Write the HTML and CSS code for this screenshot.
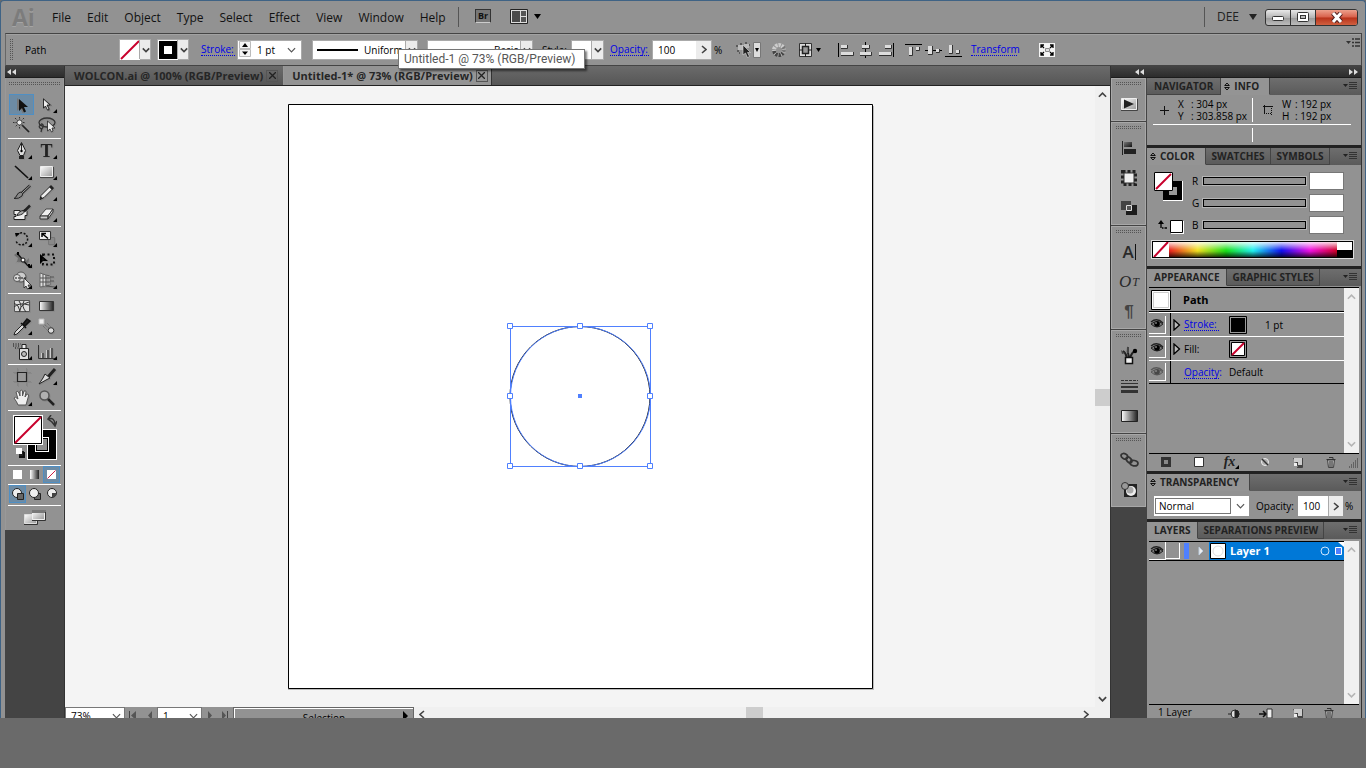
FILE: index.html
```html
<!DOCTYPE html>
<html lang="en">
<head>
<meta charset="utf-8">
<title>Untitled-1 @ 73% (RGB/Preview)</title>
<link rel="stylesheet" href="styles.css">
</head>
<body>
<svg class="defs" aria-hidden="true">
  <defs>
    <linearGradient id="light" x1="0" y1="0" x2="1" y2="1"><stop offset="0" stop-color="#fff"/><stop offset="1" stop-color="#999"/></linearGradient>
    <linearGradient id="dark" x1="0" y1="0" x2="1" y2="1"><stop offset="0" stop-color="#777"/><stop offset="1" stop-color="#111"/></linearGradient>
    <linearGradient id="ramp" x1="0" y1="0" x2="1" y2="0"><stop offset="0" stop-color="#fff"/><stop offset="1" stop-color="#222"/></linearGradient>
    <symbol id="chev" viewBox="0 0 10 6"><path d="M1 1l4 4 4-4" fill="none" stroke="#444" stroke-width="2"/></symbol>
    <symbol id="thin" viewBox="0 0 10 6"><path d="M1 1l4 4 4-4" fill="none" stroke="#555" stroke-width="1.300"/></symbol>
    <symbol id="none" viewBox="0 0 20 20"><path d="M0 0h20v20H0z" fill="#fff"/><path d="M1 19L19 1" stroke="#c8002c" stroke-width="2"/></symbol>
    <symbol id="flyout" viewBox="0 0 14 8"><path d="M0 2h5L2.500 5z" fill="#222"/><path d="M6 .5h8M6 2.500h8M6 4.500h8M6 6.500h8" stroke="#333"/></symbol>
    <symbol id="eye" viewBox="0 0 14 12"><path d="M1 4Q7-1 13 5" fill="none" stroke="#222" stroke-width="1.300"/><path d="M1 6Q7 1 13 6Q7 12 1 6z" fill="#777" stroke="#222"/><circle cx="7" cy="6" r="2.800" fill="#000"/><circle cx="6" cy="5" r=".8" fill="#ccc"/></symbol>
    <symbol id="updown" viewBox="0 0 6 9"><path d="M.7 3.500L3 1l2.300 2.500zM.7 5.500L3 8l2.300-2.500z" fill="none" stroke="#111"/></symbol>
    <symbol id="corner" viewBox="0 0 4 4"><path d="M4 0v4H0z" fill="#000"/></symbol>
    <symbol id="trash" viewBox="0 0 12 12"><path d="M2.500 4h7l-1 7.500h-5z" fill="#bbb" stroke="#444"/><path d="M1.500 3.500h9M4 1.500h4v2M5 5v6M7 5v6" stroke="#333" fill="none"/></symbol>
    <symbol id="page" viewBox="0 0 12 12"><path d="M1 2h9v9H6z" fill="#444"/><path d="M2 2h8v7H6V6H2z" fill="#ccc"/><path d="M2 7h3v3H2z" fill="#eee"/><path d="M10.500 2v9.500H5" fill="none" stroke="#444"/></symbol>
  </defs>
</svg>

<div class="app">
  <header class="menubar">
    <div class="logo">Ai</div>
    <nav class="menus">
      <a href="#">File</a><a href="#">Edit</a><a href="#">Object</a><a href="#">Type</a><a href="#">Select</a><a href="#">Effect</a><a href="#">View</a><a href="#">Window</a><a href="#">Help</a>
    </nav>
    <span class="vrule"></span>
    <button class="bridge">Br</button>
    <button class="arrange" aria-label="Arrange documents">
      <svg width="31" height="15" viewBox="0 0 31 15"><path d="M.5.500h17v14H.5z" fill="#ddd" stroke="#222"/><path d="M2 2h8v11H2z" fill="#4a4a4a"/><path d="M11 2h5v5h-5zM11 8h5v5h-5z" fill="#555"/><path d="M24 5h7l-3.500 5z" fill="#000"/></svg>
    </button>
    <span class="spacer"></span>
    <span class="vrule"></span>
    <button class="workspace">DEE <svg width="8" height="6" viewBox="0 0 8 6"><path d="M0 0h8L4 6z" fill="#222"/></svg></button>
    <div class="winbtns">
      <button aria-label="Minimize"><svg width="12" height="8" viewBox="0 0 12 8"><rect x=".5" y="3.500" width="11" height="4" rx="1" fill="#fff" stroke="#333"/></svg></button>
      <button aria-label="Restore"><svg width="12" height="10" viewBox="0 0 12 10"><rect x=".5" y=".5" width="11" height="9" rx="1" fill="#fff" stroke="#333"/><rect x="3.500" y="3.500" width="5" height="3" fill="#bbb" stroke="#333"/></svg></button>
      <button class="close" aria-label="Close"><svg width="12" height="11" viewBox="0 0 12 11"><path d="M2 1l8 9M10 1L2 10" stroke="#522" stroke-width="5"/><path d="M2 1l8 9M10 1L2 10" stroke="#fff" stroke-width="3"/></svg></button>
    </div>
  </header>

  <section class="control">
    <span class="vgrip"></span>
    <span class="kind">Path</span>
    <button class="swatchdrop" aria-label="Fill"><svg width="20" height="20"><use href="#none"/></svg><i><svg width="8" height="6"><use href="#chev"/></svg></i></button>
    <button class="swatchdrop" aria-label="Stroke color"><svg width="20" height="20" viewBox="0 0 20 20"><path d="M0 0h20v20H0z" fill="#fff"/><path d="M1 1h18v18H1z" fill="#000"/><path d="M6 6h8v8H6z" fill="#fff"/></svg><i><svg width="8" height="6"><use href="#chev"/></svg></i></button>
    <label class="lk stroke-lk" for="sw">Stroke:</label>
    <div class="field weight">
      <svg width="12" height="17" viewBox="0 0 12 17"><path d="M.5.500h11v7H.5zM.5 8.500h11v7H.5z" fill="#f4f4f4" stroke="#bbb"/><path d="M3 6h6L6 2zM3 10.500h6L6 14z" fill="#000"/></svg>
      <input id="sw" value="1 pt"><svg width="9" height="6"><use href="#thin"/></svg>
    </div>
    <button class="field profile"><svg width="41" height="2"><path d="M0 1h41" stroke="#000" stroke-width="2"/></svg><span>Uniform</span><i><svg width="8" height="6"><use href="#chev"/></svg></i></button>
    <button class="field profile brush"><svg width="56" height="2"><path d="M0 1h56" stroke="#000" stroke-width="2"/></svg><span>Basic</span><i><svg width="8" height="6"><use href="#chev"/></svg></i></button>
    <span class="style-lb">Style:</span>
    <button class="field style" aria-label="Graphic style"><i><svg width="8" height="6"><use href="#chev"/></svg></i></button>
    <label class="lk opacity-lk" for="op">Opacity:</label>
    <div class="field opac"><input id="op" value="100"><i><svg width="6" height="9" viewBox="0 0 6 9"><path d="M1 1l4 3.500L1 8" fill="none" stroke="#444" stroke-width="1.600"/></svg></i></div>
    <span class="pct">%</span>
    <button class="recolor" aria-label="Select similar"><svg width="26" height="18" viewBox="0 0 26 18"><path d="M1 5h2M5 3h2M2 10h2M10 2h2M14 4h1M4 12h1" stroke="#222"/><path d="M3 4h5v5H3zM9 3h5v4H9z" fill="#bbb"/><path d="M8 4v10l2.500-2 2 4.500 2-1-2-4h3z" fill="#222" stroke="#ddd" stroke-width=".6"/><path d="M18.500 1.500h7v15h-7z" fill="#ddd" stroke="#777"/><path d="M20 7h4l-2 4z"/></svg></button>
    <button class="wheel" aria-label="Recolor artwork"><svg width="16" height="16" viewBox="0 0 16 16"><circle cx="8" cy="8" r="5" fill="none" stroke="#ccc" stroke-width="4" stroke-dasharray="2.400 .8"/><path d="M3 9a5 5 0 0 0 9 2" fill="none" stroke="#444" stroke-width="4" stroke-dasharray="2.400 .8"/><path d="M12.500 10A5 5 0 0 0 12 5" fill="none" stroke="#777" stroke-width="4" stroke-dasharray="2.400 .8"/></svg></button>
    <button class="aligndrop" aria-label="Align to"><svg width="22" height="16" viewBox="0 0 22 16"><path d="M.5 1.500h12v13H.5z" fill="#ddd" stroke="#333"/><path d="M3.500 4.500h6v7h-6z" fill="#999" stroke="#222" stroke-width="1.500"/><path d="M6.500 1v4M6.500 11v4M0 8h3M10 8h3" stroke="#222"/><path d="M17 6h5l-2.500 4z"/></svg></button>
    <div class="aligns">
      <button aria-label="Align left"><svg width="16" height="16" viewBox="0 0 16 16"><path d="M.5 1v14" stroke="#000"/><path d="M3 3h6v3H3zM3 10h12v3H3z" fill="#ddd"/><path d="M3 6.500h6.500V3M3 13.500h12.500V10" fill="none" stroke="#333"/></svg></button>
      <button aria-label="Align center"><svg width="14" height="16" viewBox="0 0 14 16"><path d="M6.500 0v16" stroke="#000"/><path d="M3 3h7v3H3zM1 10h11v3H1z" fill="#ddd"/><path d="M3 6.500h7.500V3M1 13.500h11.500V10" fill="none" stroke="#333"/></svg></button>
      <button aria-label="Align right"><svg width="16" height="16" viewBox="0 0 16 16"><path d="M15.500 1v14" stroke="#000"/><path d="M7 3h6v3H7zM1 10h12v3H1z" fill="#ddd"/><path d="M7 6.500h6.500V3M1 13.500h12.500V10" fill="none" stroke="#333"/></svg></button>
    </div>
    <div class="aligns valigns">
      <button aria-label="Align top"><svg width="17" height="14" viewBox="0 0 17 14"><path d="M0 1.500h17" stroke="#000"/><path d="M4 4h3v8H4zM11 4h3v3h-3z" fill="#ddd"/><path d="M4 12.500h3.500V4M11 7.500h3.500V4" fill="none" stroke="#333"/></svg></button>
      <button aria-label="Align middle"><svg width="17" height="14" viewBox="0 0 17 14"><path d="M0 7.500h17" stroke="#000"/><path d="M3 3h4v8H3zM11 6h3v3h-3z" fill="#ddd"/><path d="M3 11.500h4.500V3M11 9.500h3.500V6" fill="none" stroke="#333"/></svg></button>
      <button aria-label="Align bottom"><svg width="17" height="14" viewBox="0 0 17 14"><path d="M0 13.500h17" stroke="#000"/><path d="M4 2h3v8H4zM11 7h3v3h-3z" fill="#ddd"/><path d="M4 10.500h3.500V2M11 10.500h3.500V7" fill="none" stroke="#333"/></svg></button>
    </div>
    <a class="lk transform" href="#">Transform</a>
    <button class="isolate" aria-label="Isolate"><svg width="16" height="14" viewBox="0 0 16 14"><path d="M0 0h16v14H0z" fill="#f4f4f4"/><path d="M2 5V2h3M11 2h3v3M14 9v3h-3M5 12H2V9M2 2l3 3M14 2l-3 3M14 12l-3-3M2 12l3-3" fill="none" stroke="#000" stroke-width="1.300"/><path d="M6.500 5.500h4v3h-4z" fill="#ddd" stroke="#888"/></svg></button>
    <span class="spacer"></span>
    <button class="more" aria-label="Panel menu"><svg width="14" height="9" viewBox="0 0 14 9"><path d="M0 3h5L2.500 6z" fill="#333"/><path d="M6 1h2M9 1h5M6 4.500h2M9 4.500h5M6 8h2M9 8h5" stroke="#333" stroke-width="1.500"/></svg></button>
  </section>

  <main class="work">
    <aside class="toolcol">
      <div class="dockhead left"><svg width="9" height="6" viewBox="0 0 9 6"><path d="M4 0v6L0 3zM9 0v6L5 3z" fill="#ddd"/></svg></div>
      <div class="toolbox">
        <div class="hgrip"></div>
        <div class="tools">
          <button class="on" aria-label="Selection"><svg width="20" height="20" viewBox="0 0 20 20"><path d="M5 3v13l3-3 2.500 5 2.500-1.500-2.500-4.500h4.500z" fill="#777"/><path d="M7 4v12l3-3 2 4.500 2-1-2-4.500h4z" fill="#111"/></svg></button>
          <button aria-label="Direct selection"><svg width="20" height="20" viewBox="0 0 20 20"><path d="M6 3v11l3-2.500 2 4.500 2-1-2-4.500h4z" fill="#555"/><path d="M6.500 4v9l2-2 2 4 1.500-1-2-4h3z" fill="#eee" stroke="#111" stroke-width=".8"/></svg><b></b></button>
          <button aria-label="Magic wand"><svg width="20" height="20" viewBox="0 0 20 20"><path d="M10 9l7 7" stroke="#222" stroke-width="1.700"/><path d="M7.500 1v12M1 6.500h12M3 2l9 9M12 2l-9 9" stroke="#333" stroke-dasharray="1.500 1"/><circle cx="7.500" cy="6.500" r="2.500" fill="#eee" stroke="#555"/></svg></button>
          <button aria-label="Lasso"><svg width="20" height="20" viewBox="0 0 20 20"><ellipse cx="10" cy="6.500" rx="8" ry="4.500" fill="none" stroke="#333" stroke-width="1.300"/><path d="M4 9q-3 1-1 3t3-1-2-3M5 12l-1 4" fill="none" stroke="#333" stroke-width="1.300"/><path d="M10.500 5v10l2.500-2 1.500 3 1.500-1-1-3h3z" fill="#eee" stroke="#222" stroke-width=".8"/></svg></button>
        </div>
        <div class="tools">
          <button aria-label="Pen"><svg width="20" height="20" viewBox="0 0 20 20"><path d="M9.500 1.500l-4 8L8 14.500h3.500l2-5z" fill="#ddd" stroke="#222"/><path d="M9.500 2v7" stroke="#222"/><circle cx="9.500" cy="10" r="1.200"/><path d="M7 15h5v3H7z" fill="#222"/></svg><b></b></button>
          <button class="type" aria-label="Type">T<b></b></button>
          <button aria-label="Line"><svg width="20" height="20" viewBox="0 0 20 20"><path d="M3 4l13 12" stroke="#111" stroke-width="1.600"/></svg><b></b></button>
          <button aria-label="Rectangle"><svg width="20" height="20" viewBox="0 0 20 20"><path d="M3.500 4.500h12v10h-12z" fill="url(#light)" stroke="#eee"/><path d="M3 15.500h13.500V5" fill="none" stroke="#444"/></svg><b></b></button>
          <button aria-label="Paintbrush"><svg width="20" height="20" viewBox="0 0 20 20"><path d="M18 2.500L10 10" stroke="#222" stroke-width="2.500"/><path d="M18 2.500L10 10" stroke="#ccc" stroke-width=".8"/><path d="M9 9q3 1 1 4-3 3-8 2.500 2-1 3-3.500t4-3z" fill="#888" stroke="#222"/></svg></button>
          <button aria-label="Pencil"><svg width="20" height="20" viewBox="0 0 20 20"><path d="M3 16.500l1-4L13 3.500l3 2-9 9z" fill="#eee" stroke="#222"/><path d="M3 16.500l1-3 2 2zM12 4l3 3 2-2-3-3z" fill="#222"/></svg><b></b></button>
          <button aria-label="Blob brush"><svg width="20" height="20" viewBox="0 0 20 20"><path d="M2 6.500h6v2l5-3 2 2v4h-2v4H2v-3h2v-2H2z" fill="#eee" stroke="#222"/><path d="M18 1.500l-6 6" stroke="#222" stroke-width="2.500"/><path d="M12 6.500q1 4-7 5 2-5 7-5z" fill="#aaa" stroke="#222"/></svg></button>
          <button aria-label="Eraser"><svg width="20" height="20" viewBox="0 0 20 20"><path d="M3 12l6-7h7l-5 7z" fill="#eee" stroke="#444"/><path d="M3 12h8v3H3zM11 12l5-7v3l-5 7z" fill="#ccc" stroke="#333"/></svg><b></b></button>
        </div>
        <div class="tools">
          <button aria-label="Rotate"><svg width="20" height="20" viewBox="0 0 20 20"><path d="M5 6a6 6 0 1 1-1 6" fill="none" stroke="#111" stroke-width="1.500" stroke-dasharray="2 1.500"/><path d="M3 4h5L4 8z"/></svg><b></b></button>
          <button aria-label="Scale"><svg width="20" height="20" viewBox="0 0 20 20"><path d="M11.500 8.500h6v7h-6z" fill="#888" stroke="#777"/><path d="M2.500 2.500h11v8h-11z" fill="#eee" stroke="#333"/><path d="M5 8V4.500h4M5 4.500l6 5" fill="none" stroke="#000" stroke-width="1.500"/></svg><b></b></button>
          <button aria-label="Width"><svg width="20" height="20" viewBox="0 0 20 20"><path d="M2 5q5-4 7 3t8 0q0 8-6 5T3 14q3-3 3-6z" fill="#6d6d6d"/><path d="M5 3l11 13" stroke="#111" stroke-width="1.200"/><circle cx="11" cy="10" r="2" fill="#fff" stroke="#111"/><path d="M5 2h2v3H5zM16 14h2v3h-2z"/></svg><b></b></button>
          <button aria-label="Free transform"><svg width="20" height="20" viewBox="0 0 20 20"><path d="M3 4v10l3-3h5z"/><path d="M6 4.500h11v10H6z" fill="none" stroke="#111" stroke-width="2" stroke-dasharray="2 2.500"/></svg></button>
          <button aria-label="Shape builder"><svg width="20" height="20" viewBox="0 0 20 20"><circle cx="9" cy="6" r="5" fill="#ccc" stroke="#555"/><circle cx="5" cy="7" r="3.500" fill="#ddd" stroke="#555"/><path d="M3 7h11" stroke="#111" stroke-dasharray="2 1"/><path d="M12 7v10l2-2 1.500 3 2-1-1.500-3H19z" fill="#eee" stroke="#222" stroke-width=".8"/></svg><b></b></button>
          <button aria-label="Perspective grid"><svg width="20" height="20" viewBox="0 0 20 20"><path d="M3 2l6 2v11l-6 1zM9 4l4 1v9l-4 1z" fill="#ddd" stroke="#666"/><path d="M6 3v12M3 7h10M3 11h10M11 4v11M13 6h4M13 10h4M9 15l9 1" stroke="#555"/></svg><b></b></button>
        </div>
        <div class="tools">
          <button aria-label="Mesh"><svg width="20" height="20" viewBox="0 0 20 20"><path d="M2.500 4.500h15v11h-15z" fill="#ddd" stroke="#555"/><path d="M2 11q5-5 15-2M7 5q4 5 0 11M12 5q-3 5 2 11M2 7q5 2 6 8M17 6q-5 1-8 5" fill="none" stroke="#333"/></svg></button>
          <button aria-label="Gradient"><svg width="20" height="20" viewBox="0 0 20 20"><path d="M2.500 5.500h14v9h-14z" fill="url(#ramp)" stroke="#333"/></svg></button>
          <button aria-label="Eyedropper"><svg width="20" height="20" viewBox="0 0 20 20"><path d="M2 18l1-3 8-8 2 2-8 8z" fill="#ddd" stroke="#222"/><path d="M9 6l5 5M11 7l4-5 3 2-5 5z" fill="#222" stroke="#111" stroke-width="1.500"/></svg><b></b></button>
          <button aria-label="Blend"><svg width="20" height="20" viewBox="0 0 20 20"><path d="M2 2h5v5H2z" fill="#eee" stroke="#bbb"/><path d="M8 8l6 5M10 6l4 4M6 9l4 4" stroke="#666" stroke-dasharray="1 1"/><circle cx="14" cy="13.500" r="2.800" fill="#ddd" stroke="#333"/></svg></button>
        </div>
        <div class="tools">
          <button aria-label="Symbol sprayer"><svg width="20" height="20" viewBox="0 0 20 20"><path d="M7.500 6.500h9v11h-9z" fill="#ddd" stroke="#222"/><path d="M10 2.500h4v4h-4z" fill="#eee" stroke="#222"/><circle cx="12" cy="12" r="2.500" fill="#bbb" stroke="#222"/><path d="M1 2h8M1 4h6M3 6h4" stroke="#111" stroke-dasharray="1 1.500"/></svg><b></b></button>
          <button aria-label="Graph"><svg width="20" height="20" viewBox="0 0 20 20"><path d="M1.500 3v13.500H18" fill="none" stroke="#333"/><path d="M4 11h3v5H4zM9 8h3v8H9zM13 6h3v10h-3z" fill="#555"/><path d="M4 11h1v5H4zM9 8h1v8H9zM13 6h1v10h-1z" fill="#ccc"/></svg><b></b></button>
        </div>
        <div class="tools">
          <button aria-label="Artboard"><svg width="20" height="20" viewBox="0 0 20 20"><path d="M5.500 1v18M14.500 1v18M1 5.500h18M1 14.500h18" stroke="#858585"/><path d="M5.500 5.500h9v9h-9z" fill="#999" stroke="#222" stroke-width="1.200"/></svg></button>
          <button aria-label="Slice"><svg width="20" height="20" viewBox="0 0 20 20"><path d="M18 2l-7 8" stroke="#222" stroke-width="3"/><path d="M8 7l5 4-4 2-7 4 4-6z" fill="#ddd" stroke="#222"/></svg><b></b></button>
          <button aria-label="Hand"><svg width="20" height="20" viewBox="0 0 20 20"><path d="M6 17q-1-3-4-7 1-2 4 1L4 4q2-2 3 1l1 3V3q2-2 2.500 0V8L12 3q2-1 2 1l-1 5 2-3q2 0 1.500 2L14 17z" fill="#eee" stroke="#555"/></svg><b></b></button>
          <button aria-label="Zoom"><svg width="20" height="20" viewBox="0 0 20 20"><path d="M10 10l7 7" stroke="#222" stroke-width="2.500"/><circle cx="7.500" cy="7.500" r="4.500" fill="#b0b0b0" stroke="#555" stroke-width="1.500"/></svg></button>
        </div>
        <div class="paint">
          <svg width="44" height="46" viewBox="0 0 44 46"><path d="M14 14h30v31H14z" fill="#fff"/><path d="M15 15h28v29H15z"/><path d="M22 22h14v15H22z" fill="#fff"/><path d="M23 23h12v13H23z"/><path d="M24 24h10v11H24z" fill="#8f8f8f"/><path d="M0 0h30v30H0z" fill="#fff"/><path d="M1.500 1.500h27v27h-27z" fill="#fff" stroke="#000"/><path d="M2 28L28 2" stroke="#c8002c" stroke-width="2"/><path d="M36 4q5-2 6 5M38 0l-3 4 4 3M39 7l3 4 2-5" fill="none" stroke="#333" stroke-width="1.500"/><path d="M6 36h5v7H6z" fill="#222"/><path d="M3 33h6v6H3z" fill="#fff"/><path d="M11 37v5H6" fill="none" stroke="#111" stroke-width="2"/></svg>
        </div>
        <div class="modes">
          <button aria-label="Color"><svg width="9" height="9"><path d="M0 0h9v9H0z" fill="#fff"/></svg></button>
          <button aria-label="Gradient fill"><svg width="9" height="9"><path d="M0 0h9v9H0z" fill="url(#ramp)"/></svg></button>
          <button class="on" aria-label="No fill"><svg width="9" height="9"><use href="#none"/></svg></button>
        </div>
        <div class="modes draw">
          <button class="on" aria-label="Draw normal"><svg width="14" height="14" viewBox="0 0 14 14"><circle cx="6" cy="6" r="4.500" fill="#eee" stroke="#222"/><path d="M6.500 6.500h6v6h-6z" fill="#666" stroke="#222"/></svg></button>
          <button aria-label="Draw behind"><svg width="14" height="14" viewBox="0 0 14 14"><path d="M6.500 6.500h6v6h-6z" fill="#666" stroke="#222"/><circle cx="6" cy="6" r="4.500" fill="#eee" stroke="#222"/></svg></button>
          <button aria-label="Draw inside"><svg width="14" height="14" viewBox="0 0 14 14"><circle cx="7" cy="6" r="4.500" fill="#eee" stroke="#222"/><path d="M7 6h4.500q-.5 4-4.500 4.500z" fill="#444"/></svg></button>
        </div>
        <div class="screen"><button aria-label="Screen mode"><svg width="24" height="16" viewBox="0 0 24 16"><path d="M1.500 5.500h12v9h-12z" fill="url(#light)" stroke="#ddd"/><path d="M9.500 1.500h12v9h-12z" fill="url(#light)" stroke="#eee"/><path d="M9 1h14v3H9z" fill="#777"/><path d="M9 11.500h13.500V3M1 15.500h13.500v-4" fill="none" stroke="#333"/></svg></button></div>
      </div>
    </aside>

    <section class="doc">
      <div class="tabs">
        <div class="tab">WOLCON.ai @ 100% (RGB/Preview)<button aria-label="Close WOLCON.ai"><svg width="7" height="7" viewBox="0 0 7 7"><path d="M0 0l7 7M7 0L0 7" stroke="#222" stroke-width="1.300"/></svg></button></div>
        <div class="tab active">Untitled-1* @ 73% (RGB/Preview)<button aria-label="Close Untitled-1"><svg width="7" height="7" viewBox="0 0 7 7"><path d="M0 0l7 7M7 0L0 7" stroke="#222" stroke-width="1.300"/></svg></button></div>
      </div>
      <div class="stage">
        <div class="canvas">
          <svg width="586" height="586" viewBox="288 104 586 586" fill="none">
            <path d="M288 106h586v584H288z" fill="#bbb"/>
            <path d="M288.500 104.500h584v584h-584z" fill="#fff" stroke="#000"/>
            <circle cx="580" cy="396.500" r="70" stroke="#111"/>
            <g stroke="#4f80ff"><circle cx="580.500" cy="396.500" r="70"/><path d="M510.500 326.500h140v140h-140z"/>
            <path d="M507.500 323.500h5v5h-5zM577.500 323.500h5v5h-5zM647.500 323.500h5v5h-5zM507.500 393.500h5v5h-5zM647.500 393.500h5v5h-5zM507.500 463.500h5v5h-5zM577.500 463.500h5v5h-5zM647.500 463.500h5v5h-5z" fill="#fff"/></g>
            <path d="M578 394h4v4h-4z" fill="#4f80ff"/>
          </svg>
        </div>
        <div class="vscroll"><svg width="9" height="6" viewBox="0 0 10 6"><path d="M1 5l4-4 4 4" fill="none" stroke="#444" stroke-width="1.800"/></svg><i></i><svg width="9" height="6"><use href="#chev"/></svg></div>
      </div>
      <div class="status">
        <div class="sbox zoom"><input aria-label="Zoom level" value="73%"><svg width="9" height="6"><use href="#thin"/></svg></div>
        <svg class="nav" width="24" height="18" viewBox="0 0 24 18"><path d="M.5 4v9" stroke="#444"/><path d="M7 4v9L2 8.500zM23 4v9l-4-4.500z" fill="#555"/></svg>
        <div class="sbox artno"><input aria-label="Artboard number" value="1"><svg width="9" height="6"><use href="#thin"/></svg></div>
        <svg class="nav" width="24" height="18" viewBox="0 0 24 18"><path d="M2 4v9l4-4.500zM16 4v9l4-4.500z" fill="#555"/><path d="M21.500 4v9" stroke="#444"/></svg>
        <button class="info">Selection<svg width="5" height="10" viewBox="0 0 5 10"><path d="M0 0v10l5-5z"/></svg></button>
        <div class="hscroll"><svg width="6" height="9" viewBox="0 0 6 9"><path d="M5 1L1 4.500 5 8" fill="none" stroke="#444" stroke-width="1.600"/></svg><i></i><svg width="6" height="9" viewBox="0 0 6 9"><path d="M1 1l4 3.500L1 8" fill="none" stroke="#444" stroke-width="1.600"/></svg></div>
      </div>
    </section>

    <aside class="dock">
      <div class="dockhead"><svg width="9" height="6" viewBox="0 0 9 6"><path d="M4 0v6L0 3zM9 0v6L5 3z" fill="#ddd"/></svg><svg width="9" height="6" viewBox="0 0 9 6"><path d="M0 0v6l4-3zM5 0v6l4-3z" fill="#ddd"/></svg></div>
      <div class="dockcols">
        <div class="icons">
          <div class="igroup"><div class="hgrip"></div>
            <button aria-label="Actions"><svg width="20" height="20" viewBox="0 0 20 20"><path d="M2.500 4.500h15v11h-15z" fill="url(#light)" stroke="#eee"/><path d="M2 16.500h16.500V5" fill="none" stroke="#444"/><path d="M5 5.500v9l10-4.500z" fill="#222"/></svg></button>
          </div>
          <div class="igroup"><div class="hgrip"></div>
            <button aria-label="Align"><svg width="20" height="20" viewBox="0 0 20 20"><path d="M3.500 3v14" stroke="#222"/><path d="M5 4h8v5H5z" fill="url(#dark)"/><path d="M5 11h12v5H5z" fill="#222"/></svg></button>
            <button aria-label="Transform"><svg width="20" height="20" viewBox="0 0 20 20"><path d="M3.500 3.500h13v13h-13z" fill="none" stroke="#222" stroke-width="3" stroke-dasharray="3 2"/><path d="M5 5h10v10H5z" fill="#eee" stroke="#333"/></svg></button>
            <button aria-label="Pathfinder"><svg width="20" height="20" viewBox="0 0 20 20"><path d="M2 3h10v9H2z" fill="#444"/><path d="M7 7h11v10H7z" fill="#1c1c1c"/><path d="M7.500 7.500h5v5h-5z" fill="#555" stroke="#ddd"/></svg></button>
          </div>
          <div class="igroup"><div class="hgrip"></div>
            <button class="glyph char" aria-label="Character">A</button>
            <button class="glyph ot" aria-label="OpenType">O<sub>T</sub></button>
            <button class="glyph pil" aria-label="Paragraph">¶</button>
          </div>
          <div class="igroup"><div class="hgrip"></div>
            <button aria-label="Brushes"><svg width="20" height="20" viewBox="0 0 20 20"><path d="M4 5q3 2 4 7M9 1q-1 5 1 10M16 5q-3 1-5 7" fill="none" stroke="#222" stroke-width="2"/><circle cx="16" cy="5" r="2.200"/><path d="M2 4l4 3-3 1zM8 1h2v6H8z" fill="#444"/><path d="M6.500 11.500h7v6h-7z" fill="#eee" stroke="#111" stroke-width="1.500"/></svg></button>
            <button aria-label="Stroke"><svg width="20" height="20" viewBox="0 0 20 20"><path d="M2 4.500h17" stroke="#333" stroke-dasharray="3 1"/><path d="M2 7.500h17" stroke="#333"/><path d="M2 11h17" stroke="#333" stroke-width="2"/><path d="M2 15.500h17" stroke="#333" stroke-width="3"/></svg></button>
            <button aria-label="Gradient panel"><svg width="20" height="20" viewBox="0 0 20 20"><path d="M2.500 4.500h16v11h-16z" fill="url(#ramp)" stroke="#222"/></svg></button>
          </div>
          <div class="igroup"><div class="hgrip"></div>
            <button aria-label="Links"><svg width="20" height="20" viewBox="0 0 20 20"><g fill="none" stroke="#333" stroke-width="1.700"><ellipse cx="5.500" cy="6" rx="3.500" ry="2.500" transform="rotate(30 5 6)"/><ellipse cx="15" cy="13" rx="4" ry="2.700" transform="rotate(10 14 13)"/><ellipse cx="10" cy="10" rx="3.500" ry="2.200" transform="rotate(50 10 10)"/></g></svg></button>
            <button aria-label="Symbols panel"><svg width="20" height="20" viewBox="0 0 20 20"><path d="M5 4h13v13H5z" fill="#222"/><circle cx="12" cy="11" r="5" fill="#eee"/><circle cx="11" cy="10" r="3.500" fill="#aaa"/><circle cx="6" cy="6" r="3.500" fill="#999" stroke="#333"/></svg></button>
          </div>
        </div>

        <div class="panels">
          <section class="panel">
            <div class="ptabs"><button class="nav-tab">NAVIGATOR</button><button class="on"><svg width="6" height="9"><use href="#updown"/></svg>INFO</button><svg class="fly" width="14" height="8"><use href="#flyout"/></svg></div>
            <div class="pinfo">
              <div class="half"><svg width="9" height="9" viewBox="0 0 9 9"><path d="M4.500 0v9M0 4.500h9" stroke="#111"/></svg>
                <dl><dt>X</dt><dd>: 304 px</dd><dt>Y</dt><dd>: 303.858 px</dd></dl></div>
              <div class="half second"><svg width="10" height="10" viewBox="0 0 10 10"><path d="M0 1.500h10M1.500 0v9" stroke="#111"/><path d="M8.500 1v9M1 8.500h8" stroke="#111" stroke-dasharray="1 1"/></svg>
                <dl><dt>W</dt><dd>: 192 px</dd><dt>H</dt><dd>: 192 px</dd></dl></div>
            </div>
            <div class="pinfo2"><i></i></div>
          </section>

          <section class="panel">
            <div class="ptabs"><button class="on"><svg width="6" height="9"><use href="#updown"/></svg>COLOR</button><button>SWATCHES</button><button>SYMBOLS</button><svg class="fly" width="14" height="8"><use href="#flyout"/></svg></div>
            <div class="pcolor">
              <div class="cleft">
                <svg width="29" height="29" viewBox="0 0 29 29"><path d="M9 9h20v20H9z" fill="#fff"/><path d="M9 9h19v19H9z"/><path d="M15 15h8v8h-8z" fill="#999"/><path d="M0 0h19v19H0z" fill="#fff"/><path d="M.5.500h18v18H.5z" fill="#fff" stroke="#000"/><path d="M2 17L17 2" stroke="#c8002c" stroke-width="2"/></svg>
                <svg class="cube" width="26" height="14" viewBox="0 0 26 14"><path d="M3 2v6h6" fill="none" stroke="#000" stroke-width="1.300" stroke-dasharray="6 1 1.500 1"/><path d="M0 4l3-4 3 4z"/><path d="M13 1h13v13H13z" fill="#fff"/><path d="M12.500.500h12v12h-12z" fill="#fff" stroke="#000"/></svg>
              </div>
              <div class="sliders">
                <label for="r">R</label><input id="r" type="range"><input aria-label="Red value">
                <label for="g">G</label><input id="g" type="range"><input aria-label="Green value">
                <label for="b">B</label><input id="b" type="range"><input aria-label="Blue value">
              </div>
              <div class="spectrum"><svg width="16" height="15" viewBox="0 0 16 15"><path d="M0 0h16v15H0z" fill="#fff"/><path d="M1 15L15 0" stroke="#c8002c" stroke-width="2"/></svg><i></i><b></b></div>
            </div>
          </section>

          <section class="panel">
            <div class="ptabs"><button class="on plain">APPEARANCE</button><button>GRAPHIC STYLES</button><svg class="fly" width="14" height="8"><use href="#flyout"/></svg></div>
            <div class="pappear">
              <div class="listwrap">
                <div class="alist">
                  <div class="arow head"><svg width="20" height="20" viewBox="0 0 20 20"><path d="M.5.500h19v19H.5z" fill="#fff" stroke="#000"/><path d="M2.500 2.500h15v15h-15z" fill="#fff" stroke="#ccc"/></svg><strong>Path</strong></div>
                  <div class="arow"><span class="eyecell"><svg width="14" height="12"><use href="#eye"/></svg></span><svg class="tri" width="8" height="12" viewBox="0 0 8 12"><path d="M1 1v10l5.500-5z" fill="#bbb" stroke="#000" stroke-width="1.300"/></svg><a class="lk" href="#">Stroke:</a><svg class="sw" width="18" height="18" viewBox="0 0 18 18"><path d="M.5.500h17v17H.5z" fill="#999" stroke="#000"/><path d="M2 2h14v14H2z"/></svg><span>1 pt</span></div>
                  <div class="arow"><span class="eyecell"><svg width="14" height="12"><use href="#eye"/></svg></span><svg class="tri" width="8" height="12" viewBox="0 0 8 12"><path d="M1 1v10l5.500-5z" fill="#bbb" stroke="#000" stroke-width="1.300"/></svg><span class="fill">Fill:</span><svg class="sw" width="18" height="18" viewBox="0 0 18 18"><path d="M.5.500h17v17H.5z" fill="#999" stroke="#000"/><path d="M2.500 2.500h13v13h-13z" fill="#fff" stroke="#000"/><path d="M3 15L15 3" stroke="#c8002c" stroke-width="2"/></svg></div>
                  <div class="arow last"><span class="eyecell dim"><svg width="14" height="12"><use href="#eye"/></svg></span><span class="tri"></span><a class="lk" href="#">Opacity:</a><span class="def">Default</span></div>
                </div>
                <div class="pscroll"><svg width="9" height="6" viewBox="0 0 10 6"><path d="M1 5l4-4 4 4" fill="none" stroke="#b5b5b5" stroke-width="1.800"/></svg><svg width="9" height="6" viewBox="0 0 10 6"><path d="M1 1l4 4 4-4" fill="none" stroke="#b5b5b5" stroke-width="1.800"/></svg></div>
              </div>
              <div class="afoot">
                <svg width="10" height="10"><path d="M1.500 1.500h7v7h-7z" fill="#888" stroke="#333" stroke-width="3"/></svg>
                <svg width="10" height="10"><path d="M.5.500h9v9h-9z" fill="#fff" stroke="#333"/></svg>
                <button class="fx">fx<svg width="4" height="4"><use href="#corner"/></svg></button>
                <svg width="10" height="10" viewBox="0 0 10 10"><circle cx="5" cy="5" r="3.500" fill="#aaa" stroke="#eee"/><path d="M2 2l6 6" stroke="#333" stroke-width="1.500"/></svg>
                <svg width="12" height="12"><use href="#page"/></svg>
                <svg width="12" height="12"><use href="#trash"/></svg>
                <svg class="grip" width="11" height="11" viewBox="0 0 11 11"><path d="M9 1h2M7 3h4M5 5h6M3 7h8M1 9h10" stroke="#333" stroke-dasharray="1 1"/></svg>
              </div>
            </div>
          </section>

          <section class="panel">
            <div class="ptabs"><button class="on wide"><svg width="6" height="9"><use href="#updown"/></svg>TRANSPARENCY</button><svg class="fly" width="14" height="8"><use href="#flyout"/></svg></div>
            <div class="ptrans">
              <div class="blend"><select aria-label="Blend mode"><option>Normal</option></select><svg width="9" height="6"><use href="#thin"/></svg></div>
              <label for="top">Opacity:</label>
              <div class="field opac2"><input id="top" value="100"><i><svg width="6" height="9" viewBox="0 0 6 9"><path d="M1 1l4 3.500L1 8" fill="none" stroke="#444" stroke-width="1.600"/></svg></i></div>
              <span>%</span>
            </div>
          </section>

          <section class="panel grow">
            <div class="ptabs"><button class="on plain">LAYERS</button><button>SEPARATIONS PREVIEW</button><svg class="fly" width="14" height="8"><use href="#flyout"/></svg></div>
            <div class="players">
              <div class="llist">
                <div class="lrow"><span class="eyecell"><svg width="14" height="12"><use href="#eye"/></svg></span><span class="lock"></span><span class="bar"></span>
                  <svg class="ltri" width="6" height="10" viewBox="0 0 6 10"><path d="M1 1v8l4-4z" fill="#eee" stroke="#bcd"/></svg>
                  <div class="lname"><svg width="16" height="16" viewBox="0 0 16 16"><path d="M.5.500h15v15H.5z" fill="#fff" stroke="#000"/><circle cx="8" cy="8" r="5" fill="none" stroke="#ddd"/></svg><strong>Layer 1</strong><svg width="24" height="18" viewBox="0 0 24 18"><circle cx="5" cy="9" r="4" fill="none" stroke="#cfe6ff"/><path d="M15.500 5.500h6v7h-6z" fill="#4f80ff" stroke="#fff"/><path d="M18 0h6v5z" fill="#fff"/></svg></div>
                </div>
              </div>
              <div class="pscroll"><svg width="9" height="6" viewBox="0 0 10 6"><path d="M1 5l4-4 4 4" fill="none" stroke="#b5b5b5" stroke-width="1.800"/></svg><svg width="9" height="6" viewBox="0 0 10 6"><path d="M1 1l4 4 4-4" fill="none" stroke="#b5b5b5" stroke-width="1.800"/></svg></div>
            </div>
            <div class="lfoot"><span>1 Layer</span>
              <svg width="12" height="12" viewBox="0 0 12 12"><circle cx="7" cy="7" r="4" fill="#ddd" stroke="#333"/><path d="M7 3v8a4 4 0 0 0 0-8zM0 7h4" fill="#222" stroke="#222"/></svg>
              <svg width="14" height="12" viewBox="0 0 14 12"><path d="M0 7h6M4 4l3 3-3 3" fill="none" stroke="#111" stroke-width="1.500"/><path d="M8 2h5v9H8z" fill="#eee" stroke="#333"/></svg>
              <svg width="12" height="12"><use href="#page"/></svg>
              <svg width="12" height="12"><use href="#trash"/></svg>
            </div>
          </section>
        </div>
      </div>
    </aside>
  </main>
  <div class="tooltip" role="tooltip">Untitled-1 @ 73% (RGB/Preview)</div>
</div>
<footer class="band"></footer>
</body>
</html>
```
FILE: styles.css
```css
* { box-sizing: border-box; }
body { margin: 0; height: 100vh; display: flex; flex-direction: column; overflow: hidden; background: #6a6a6a; color: #000; font: 10px/12px "Open Sans", "Noto Sans", sans-serif; }
svg { display: block; flex: none; }
.defs { position: absolute; width: 0; height: 0; }
button, input, select { font: inherit; color: inherit; margin: 0; padding: 0; border: 0; background: none; border-radius: 0; min-width: 0; }
button { display: flex; align-items: center; justify-content: center; flex: none; }
a { color: inherit; text-decoration: none; }
i, dl, dd { font-style: normal; margin: 0; }
.spacer { flex: 1; }

.app { position: relative; flex: 1; min-height: 0; display: flex; flex-direction: column; overflow: hidden; background: #929292; border: 1px solid #3f6385; border-bottom: 0; border-radius: 4px 4px 0 0; padding: 0 3px 0 4px; }
.band { height: 50px; flex: none; }

/* Menu bar */
.menubar { height: 32px; flex: none; display: flex; align-items: center; font: 12px/16px "Open Sans", "Noto Sans", sans-serif; color: #111; }
.logo { width: 47px; padding-left: 7px; font: bold 23px/30px "Open Sans", sans-serif; color: #7c7c7c; text-shadow: 0 1px 0 #a5a5a5; }
.menus { display: flex; gap: 16px; width: 406px; padding-top: 1px; }
.vrule { width: 1px; height: 20px; background: #555; }
.bridge { width: 16px; height: 14px; margin: 0 0 2px 16px; border: 1px solid #333; border-bottom-color: #ccc; background: #777; font-size: 9px; font-weight: bold; line-height: 12px; color: #111; }
.arrange { margin: 0 0 2px 19px; }
.workspace { gap: 10px; width: 60px; padding-left: 4px; color: #222; }
.winbtns { display: flex; margin-right: 4px; border: 1px solid #333; border-radius: 3px; background: linear-gradient(#e8e8e8, #b5b5b5 50%, #999 52%, #bbb); overflow: hidden; }
.winbtns button { width: 25px; height: 15px; border-right: 1px solid #333; }
.winbtns .close { width: 41px; border-right: 0; background: linear-gradient(#eda08c, #d8604a 48%, #b8321a 52%, #d06040); }

/* Control bar */
.control { height: 33px; flex: none; display: flex; align-items: center; border: 1px solid #444; border-left-color: #666; padding-left: 3px; box-shadow: inset 0 1px #a2a2a2; }
.vgrip { width: 4px; height: 22px; background: conic-gradient(#555 25%, transparent 0) 0 0 / 2px 2px; }
.kind { width: 106px; padding-left: 12px; }
.swatchdrop { width: 32px; height: 21px; margin-right: 6px; background: #fff; border: 1px solid #aaa; }
.swatchdrop svg:first-child { margin-right: -1px; }
.swatchdrop i, .field i { display: flex; align-items: center; justify-content: center; width: 12px; align-self: stretch; background: #ececec; border-left: 1px solid #aaa; }
.lk { color: #0000e6; border-bottom: 1px dotted #0000e6; }
.stroke-lk { margin-left: 6px; width: 34px; white-space: nowrap; }
.field { display: flex; align-items: center; height: 20px; background: #fff; border: 1px solid #aaa; }
.weight { width: 65px; margin-left: 2px; padding: 0 5px 0 1px; }
.weight input { flex: 1; padding-left: 6px; }
.profile { width: 106px; margin-left: 10px; padding-left: 4px; }
.profile span { margin-left: auto; width: 42px; text-align: left; padding-left: 1px; }
.brush { margin-left: 9px; }
.brush span { width: 27px; }
.style-lb { margin-left: 9px; width: 29px; }
.style { width: 33px; justify-content: flex-end; }
.opacity-lk { margin-left: 6px; width: 39px; white-space: nowrap; }
.opac { width: 60px; margin-left: 3px; }
.opac input { flex: 1; padding-left: 5px; }
.opac i, .opac2 i { width: 15px; }
.opac i { border: 0; }
.pct { width: 23px; padding-left: 2px; }
.wheel { margin-left: 10px; }
.aligndrop { margin-left: 12px; }
.aligns { display: flex; gap: 5px; margin-left: 17px; }
.valigns { gap: 3px; margin-left: 11px; }
.transform { margin-left: 9px; width: 46px; white-space: nowrap; }
.isolate { margin-left: 22px; }
.more { align-self: flex-start; margin: 4px 1px 0 0; }

/* Tool column */
.work { flex: 1; min-height: 0; display: flex; }
.toolcol { width: 60px; flex: none; background: #444; border-right: 1px solid #333; }
.dockhead { height: 12px; flex: none; display: flex; align-items: center; justify-content: space-between; background: linear-gradient(#444, #2c2c2c); border-bottom: 1px solid #1c1c1c; padding: 0 3px 0 24px; }
.dockhead.left { padding: 0 2px; }
.toolbox { background: #929292; border: 1px solid #999; border-width: 0 1px; padding: 0 2px; }
.hgrip { height: 15px; background: conic-gradient(#555 25%, transparent 0) 0 4px / 2px 2px repeat-x, conic-gradient(#555 25%, transparent 0) 0 6px / 2px 2px repeat-x; }
.tools { display: grid; grid-template-columns: 25px 25px; grid-auto-rows: 21px; padding: 1px 0 2px 1px; border-bottom: 1px solid #fff; }
.tools button { position: relative; width: 25px; height: 21px; filter: drop-shadow(1px 1px 0 #80808080); }
.tools .on { background: #6d8ba4; border: 1px solid #4f8fc4; filter: none; }
.tools b { position: absolute; right: 2px; bottom: 2px; border: 2px solid #000; border-top-color: transparent; border-left-color: transparent; }
.type { font: bold 18px/20px "Liberation Serif", serif; color: #222; }
.paint { height: 55px; padding: 4px 0 0 5px; border-bottom: 1px solid #fff; }
.modes { display: grid; grid-template-columns: 17px 17px 17px; height: 19px; border-bottom: 1px solid #fff; padding-left: 1px; }
.modes button { height: 17px; }
.modes .on { background: #6d8ba4; border: 1px solid #4f8fc4; }
.draw { height: 21px; }
.draw button { height: 18px; }
.screen { height: 24px; display: flex; align-items: center; justify-content: center; padding-bottom: 2px; }

/* Document window */
.doc { flex: 1; min-width: 0; display: flex; flex-direction: column; }
.tabs { height: 20px; flex: none; display: flex; background: linear-gradient(#6b6b6b, #565656); border-bottom: 1px solid #222; font: bold 11px/18px "Open Sans", "Noto Sans", sans-serif; color: #262626; }
.tab { display: flex; align-items: center; padding: 0 5px 0 9px; gap: 3px; border-right: 1px solid #999; white-space: nowrap; }
.tab.active { background: #949494; border-right-color: #333; padding: 0 3px 0 8px; }
.tab button { width: 12px; height: 12px; border: 1px solid #555; }
.stage { flex: 1; min-height: 0; display: flex; background: #f4f4f4; }
.canvas { flex: 1; min-width: 0; display: flex; align-items: center; justify-content: center; overflow: hidden; padding-left: 2px; }
.vscroll { width: 15px; flex: none; display: flex; flex-direction: column; align-items: center; justify-content: space-between; background: #f0f0f0; padding: 6px 0 5px; }
.vscroll i { width: 15px; height: 17px; background: #cdcdcd; }
.status { height: 11px; flex: none; display: flex; align-items: flex-start; overflow: hidden; background: #929292; }
.status > * { height: 18px; flex: none; }
.sbox { display: flex; align-items: center; background: #fff; border: 1px solid #777; padding-right: 3px; }
.sbox input { flex: 1; padding-left: 5px; }
.zoom { width: 60px; }
.artno { width: 45px; }
.nav { margin: 0 4px; }
.info { width: 179px; position: relative; border: solid #fff; border-width: 1px 0 0 1px; margin-top: 1px; outline: 1px solid #666; }
.info svg { position: absolute; right: 5px; top: 2px; }
.status .hscroll { flex: 1; }
.hscroll { display: flex; align-items: center; justify-content: space-between; background: #f0f0f0; padding: 0 21px 4px 6px; }
.hscroll i { width: 17px; height: 16px; background: #cdcdcd; }

/* Dock */
.dock { width: 252px; flex: none; display: flex; flex-direction: column; background: #444; border: solid #333; border-width: 0 1px; }
.dockcols { flex: 1; min-height: 0; display: flex; gap: 1px; }
.icons { width: 35px; flex: none; }
.igroup { background: #929292; border: 1px solid #a8a8a8; margin-bottom: 1px; padding: 0 3px; }
.igroup .hgrip { height: 11px; background-position: 0 3px, 0 5px; }
.igroup button { width: 27px; height: 30px; padding: 0 0 2px 1px; }
.igroup .glyph { font: 600 17px/20px "Open Sans", sans-serif; color: #2a2a2a; gap: 1px; }
.igroup .char::after { content: ""; width: 1px; height: 16px; background: #111; }
.igroup .ot { font: italic 17px/20px "Liberation Serif", serif; }
.igroup .pil { font: bold 17px/20px "Liberation Sans", sans-serif; color: #444; }
.ot sub { font-size: 12px; }

.panels { flex: 1; min-width: 0; display: flex; flex-direction: column; }
.panel { background: #929292; border-bottom: 3px solid #222; flex: none; }
.panel.grow { flex: 1; display: flex; flex-direction: column; border-bottom: 0; min-height: 0; }
.ptabs { display: flex; height: 17px; flex: none; background: linear-gradient(#6e6e6e, #5a5a5a); font: bold 10px/16px "Open Sans", "Noto Sans", sans-serif; color: #222; }
.ptabs button { padding: 0 5px 0 6px; gap: 4px; border: solid #444; border-width: 0 1px 1px 0; white-space: nowrap; }
.ptabs .nav-tab { padding: 0 7px; }
.ptabs .on { background: #949494; border-bottom-color: #949494; padding: 0 10px 0 3px; }
.ptabs .plain { padding: 0 6px 0 7px; }
.fly { margin: 4px 4px 0 auto; }

.pinfo { display: flex; height: 29px; padding: 3px 0 0 13px; margin-right: 10px; }
.half { display: flex; align-items: center; width: 93px; height: 24px; border-right: 1px solid #fff; }
.half.second { border: 0; padding-left: 10px; }
dl { display: grid; grid-template-columns: 13px auto; margin-left: 9px; white-space: nowrap; }
.pinfo2 { margin: 0 10px 0 6px; height: 21px; border-top: 1px solid #fff; padding: 3px 0 0 99px; }
.pinfo2 i { display: block; width: 1px; height: 14px; background: #fff; }

.pcolor { display: grid; grid-template-columns: 30px 1fr; padding: 7px 8px 8px 5px; }
.cleft { display: flex; flex-direction: column; justify-content: space-between; height: 62px; padding-left: 2px; }
.cube { margin-left: 4px; }
.sliders { display: grid; grid-template-columns: 8px 1fr 35px; gap: 4px 3px; align-items: center; margin: 0 9px 0 10px; }
.sliders input { height: 18px; width: 100%; background: #fff; border: 1px solid #777; }
.sliders input[type="range"] { appearance: none; height: 8px; background: #929292; border: 1px solid #000; outline: 1px solid #b5b5b5; }
input[type="range"]::-webkit-slider-thumb { appearance: none; width: 0; height: 0; }
.spectrum { grid-column: 1 / 3; display: flex; height: 17px; margin-top: 7px; border: 1px solid #000; outline: 1px solid #ddd; }
.spectrum i { flex: 1; background: linear-gradient(#ffffffdd, #fff0 55%, #0000 60%, #000000bb), linear-gradient(90deg, #e82020, #f0e020 17%, #18e018 34%, #20f0f0 50%, #1010f0 67%, #f010e0 84%, #d00028); }
.spectrum b { width: 15px; background: linear-gradient(#fff 50%, #000 50%); }

.pappear { padding: 1px 2px 0; }
.listwrap { display: flex; height: 167px; border: solid #000; border-width: 1px 0; }
.alist { flex: 1; }
.arow { display: flex; align-items: center; height: 24px; border-top: 1px solid #fff; }
.arow.head { border-top: 0; border-bottom: 1px solid #000; padding-left: 2px; gap: 12px; font-size: 11px; }
.arow.last { border-bottom: 1px solid #000; }
.eyecell { display: flex; align-items: center; justify-content: center; width: 17px; height: 18px; border: 1px solid #fff; border-width: 0 1px 1px 0; }
.arow .eyecell { margin-right: 4px; }
.arow .tri { padding-left: 0; }
.arow:not(.head) { background: linear-gradient(#000, #000) 21px 0 / 1px 100% no-repeat; }
.dim svg { opacity: .5; }
.tri { margin: 0 3px; width: 8px; height: 12px; }
.arow .lk, .arow .fill { width: 35px; white-space: nowrap; }
.sw { margin: 0 18px 0 10px; }
.arow .def { margin-left: 10px; }
.pscroll { width: 15px; flex: none; background: #f0f0f0; display: flex; flex-direction: column; align-items: center; justify-content: space-between; padding: 6px 0; }
.afoot { display: grid; grid-template-columns: repeat(6, 33px) 1fr; place-items: center; height: 17px; padding-bottom: 2px; }
.fx { font: italic bold 14px/14px "Liberation Serif", serif; color: #222; }
.fx svg { align-self: flex-end; }
.afoot .grip { place-self: end; }

.ptrans { display: flex; align-items: center; height: 28px; padding: 2px 0 0 7px; }
.blend { display: flex; align-items: center; justify-content: space-between; width: 95px; height: 20px; background: #fff; padding: 0 4px 0 1px; }
.blend select { appearance: none; width: 76px; height: 16px; border: 1px solid #777; padding-left: 3px; background: #fff; }
.ptrans label { margin-left: 7px; width: 42px; white-space: nowrap; }
.opac2 { width: 45px; border: 0; }
.opac2 input { flex: 1; padding-left: 5px; }
.ptrans > span { margin-left: 2px; }

.players { flex: 1; min-height: 0; display: flex; margin: 2px 2px 0; border-bottom: 1px solid #000; }
.llist { flex: 1; }
.lrow { display: flex; align-items: center; height: 20px; border: solid #000; border-width: 1px 0; }
.lock { width: 14px; height: 16px; border: 1px solid #fff; border-width: 0 1px 1px 0; }
.bar { width: 5px; height: 16px; margin-left: 4px; background: #4f80ff; }
.ltri { margin: 0 5px 0 9px; }
.lname { flex: 1; align-self: stretch; display: flex; align-items: center; gap: 4px; padding-left: 1px; background: #0078d7; color: #fff; font-size: 11px; }
.lname strong { flex: 1; white-space: nowrap; }
.lfoot { height: 13px; flex: none; display: flex; align-items: flex-start; gap: 19px; padding: 2px 26px 0 11px; overflow: hidden; }
.lfoot span { margin-right: auto; line-height: 11px; }

.tooltip { position: absolute; left: 397px; top: 48px; height: 20px; padding: 0 9px 0 5px; background: #fff; border: 1px solid #767676; box-shadow: 2px 2px 2px #0008; font: 12px/18px Roboto, "Open Sans", sans-serif; color: #575757; white-space: nowrap; }
```
